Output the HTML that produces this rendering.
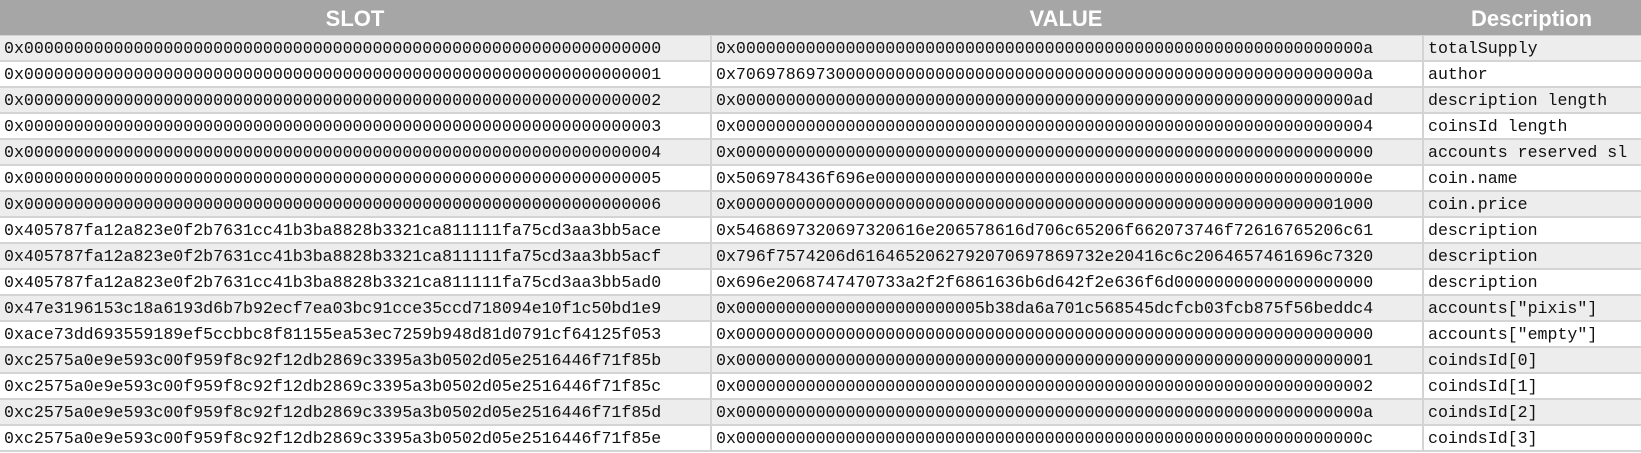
<!DOCTYPE html>
<html><head><meta charset="utf-8"><style>
*{margin:0;padding:0;box-sizing:border-box}
body{width:1641px;height:453px;background:#fff;overflow:hidden}
.h{position:absolute;top:0;left:0;width:1641px;height:36px;background:#a6a6a6;border-bottom:1px solid #d4d4d4}
.h div{position:absolute;top:0;height:36px;font:bold 22px "Liberation Sans",sans-serif;line-height:37px;text-align:center;color:#fff}
.r{position:absolute;left:0;width:1641px;height:26px;border-bottom:2px solid #d4d4d4}
.r div{position:absolute;top:0;height:24px;font:16.6px "Liberation Mono",monospace;line-height:25px;color:#111;white-space:nowrap;overflow:hidden;padding-left:4px}
.a{left:0;width:710px}
.b{left:710px;width:712px;border-left:2px solid #d4d4d4}
.c{left:1422px;width:219px;border-left:2px solid #d4d4d4}
</style></head><body>
<div class="h"><div style="left:0;width:710px">SLOT</div><div style="left:710px;width:712px">VALUE</div><div style="left:1422px;width:219px">Description</div></div>
<div id="t">
<div class="r" style="top:36px;background:#ededed"><div class="a">0x0000000000000000000000000000000000000000000000000000000000000000</div><div class="b">0x000000000000000000000000000000000000000000000000000000000000000a</div><div class="c">totalSupply</div></div>
<div class="r" style="top:62px;background:#fff"><div class="a">0x0000000000000000000000000000000000000000000000000000000000000001</div><div class="b">0x706978697300000000000000000000000000000000000000000000000000000a</div><div class="c">author</div></div>
<div class="r" style="top:88px;background:#ededed"><div class="a">0x0000000000000000000000000000000000000000000000000000000000000002</div><div class="b">0x00000000000000000000000000000000000000000000000000000000000000ad</div><div class="c">description length</div></div>
<div class="r" style="top:114px;background:#fff"><div class="a">0x0000000000000000000000000000000000000000000000000000000000000003</div><div class="b">0x0000000000000000000000000000000000000000000000000000000000000004</div><div class="c">coinsId length</div></div>
<div class="r" style="top:140px;background:#ededed"><div class="a">0x0000000000000000000000000000000000000000000000000000000000000004</div><div class="b">0x0000000000000000000000000000000000000000000000000000000000000000</div><div class="c">accounts reserved sl</div></div>
<div class="r" style="top:166px;background:#fff"><div class="a">0x0000000000000000000000000000000000000000000000000000000000000005</div><div class="b">0x506978436f696e0000000000000000000000000000000000000000000000000e</div><div class="c">coin.name</div></div>
<div class="r" style="top:192px;background:#ededed"><div class="a">0x0000000000000000000000000000000000000000000000000000000000000006</div><div class="b">0x0000000000000000000000000000000000000000000000000000000000001000</div><div class="c">coin.price</div></div>
<div class="r" style="top:218px;background:#fff"><div class="a">0x405787fa12a823e0f2b7631cc41b3ba8828b3321ca811111fa75cd3aa3bb5ace</div><div class="b">0x5468697320697320616e206578616d706c65206f662073746f72616765206c61</div><div class="c">description</div></div>
<div class="r" style="top:244px;background:#ededed"><div class="a">0x405787fa12a823e0f2b7631cc41b3ba8828b3321ca811111fa75cd3aa3bb5acf</div><div class="b">0x796f7574206d6164652062792070697869732e20416c6c2064657461696c7320</div><div class="c">description</div></div>
<div class="r" style="top:270px;background:#fff"><div class="a">0x405787fa12a823e0f2b7631cc41b3ba8828b3321ca811111fa75cd3aa3bb5ad0</div><div class="b">0x696e2068747470733a2f2f6861636b6d642f2e636f6d00000000000000000000</div><div class="c">description</div></div>
<div class="r" style="top:296px;background:#ededed"><div class="a">0x47e3196153c18a6193d6b7b92ecf7ea03bc91cce35ccd718094e10f1c50bd1e9</div><div class="b">0x0000000000000000000000005b38da6a701c568545dcfcb03fcb875f56beddc4</div><div class="c">accounts["pixis"]</div></div>
<div class="r" style="top:322px;background:#fff"><div class="a">0xace73dd693559189ef5ccbbc8f81155ea53ec7259b948d81d0791cf64125f053</div><div class="b">0x0000000000000000000000000000000000000000000000000000000000000000</div><div class="c">accounts["empty"]</div></div>
<div class="r" style="top:348px;background:#ededed"><div class="a">0xc2575a0e9e593c00f959f8c92f12db2869c3395a3b0502d05e2516446f71f85b</div><div class="b">0x0000000000000000000000000000000000000000000000000000000000000001</div><div class="c">coindsId[0]</div></div>
<div class="r" style="top:374px;background:#fff"><div class="a">0xc2575a0e9e593c00f959f8c92f12db2869c3395a3b0502d05e2516446f71f85c</div><div class="b">0x0000000000000000000000000000000000000000000000000000000000000002</div><div class="c">coindsId[1]</div></div>
<div class="r" style="top:400px;background:#ededed"><div class="a">0xc2575a0e9e593c00f959f8c92f12db2869c3395a3b0502d05e2516446f71f85d</div><div class="b">0x000000000000000000000000000000000000000000000000000000000000000a</div><div class="c">coindsId[2]</div></div>
<div class="r" style="top:426px;background:#fff"><div class="a">0xc2575a0e9e593c00f959f8c92f12db2869c3395a3b0502d05e2516446f71f85e</div><div class="b">0x000000000000000000000000000000000000000000000000000000000000000c</div><div class="c">coindsId[3]</div></div>
</div>
</body></html>
